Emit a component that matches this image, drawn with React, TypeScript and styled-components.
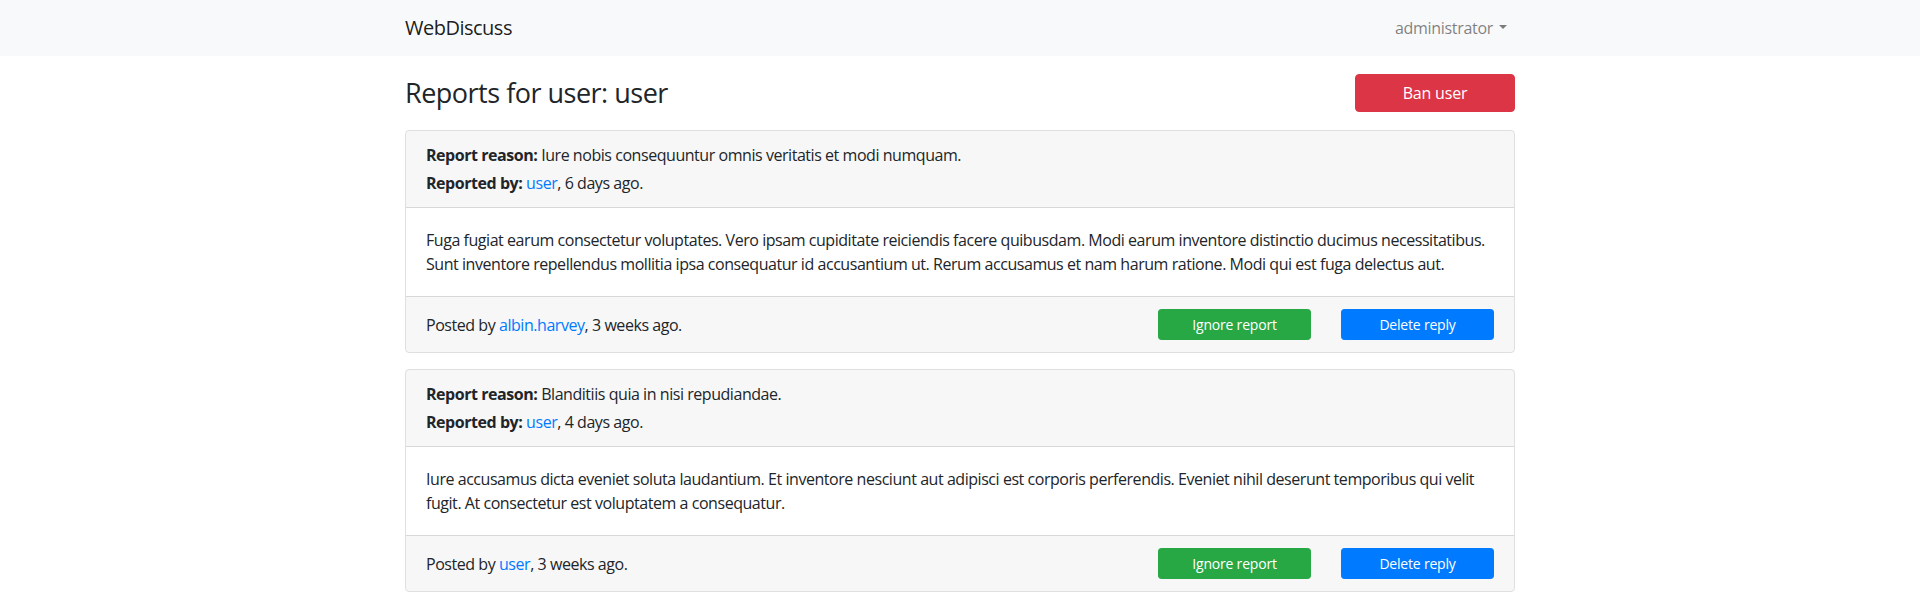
import React from "react";
import styled, { createGlobalStyle } from "styled-components";

const GlobalStyle = createGlobalStyle`
  * { box-sizing: border-box; }
  body {
    margin: 0;
    font-family: "Open Sans", "Noto Sans", Arial, sans-serif;
    font-size: 16px;
    line-height: 1.5;
    color: #212529;
    background: #fff;
    letter-spacing: -0.45px;
  }
`;

const Navbar = styled.nav`
  background: #f8f9fa;
  padding: 8px 16px;
`;

const NavInner = styled.div`
  width: 1140px;
  margin: 0 auto;
  padding: 0 15px;
  display: flex;
  align-items: center;
  justify-content: space-between;
`;

const Brand = styled.a`
  font-size: 20px;
  line-height: 30px;
  padding: 5px 0;
  color: rgba(0, 0, 0, 0.9);
  text-decoration: none;
  letter-spacing: -0.5px;
`;

const UserMenu = styled.a`
  display: flex;
  align-items: center;
  padding: 8px 8px;
  color: rgba(0, 0, 0, 0.5);
  text-decoration: none;
  letter-spacing: -0.3px;
  &::after {
    content: "";
    margin-left: 6px;
    border-top: 4.8px solid;
    border-left: 4.8px solid transparent;
    border-right: 4.8px solid transparent;
    margin-top: -2px;
  }
`;

const Container = styled.main`
  width: 1140px;
  margin: 0 auto;
  padding: 0 15px;
`;

const HeaderRow = styled.div`
  display: flex;
  align-items: center;
  justify-content: space-between;
  margin: 18px 0;
`;

const Title = styled.h3`
  margin: 0;
  font-size: 27px;
  font-weight: 400;
  line-height: 1.2;
  letter-spacing: -0.5px;
`;

const Button = styled.button<{ $variant: "danger" | "success" | "primary"; $small?: boolean }>`
  font-family: inherit;
  letter-spacing: -0.2px;
  border: 1px solid transparent;
  color: #fff;
  cursor: pointer;
  text-align: center;
  background: ${(p) =>
    p.$variant === "danger" ? "#dc3545" : p.$variant === "success" ? "#28a745" : "#007bff"};
  border-color: ${(p) =>
    p.$variant === "danger" ? "#dc3545" : p.$variant === "success" ? "#28a745" : "#007bff"};
  height: ${(p) => (p.$small ? "31px" : "38px")};
  font-size: ${(p) => (p.$small ? "14px" : "16px")};
  border-radius: ${(p) => (p.$small ? "3.2px" : "4px")};
  padding: ${(p) => (p.$small ? "4px 8px" : "6px 12px")};
  width: ${(p) => (p.$small ? "153px" : "160px")};
`;

const Card = styled.section`
  border: 1px solid rgba(0, 0, 0, 0.125);
  border-radius: 4px;
  margin-bottom: 16px;
  overflow: hidden;
`;

const CardHeader = styled.div`
  background: rgba(0, 0, 0, 0.03);
  padding: 12px 20px;
  border-bottom: 1px solid rgba(0, 0, 0, 0.125);
`;

const HeaderLine = styled.p`
  margin: 0 0 4px;
  &:last-child {
    margin-bottom: 0;
  }
`;

const Label = styled.b`
  font-weight: 700;
`;

const Link = styled.a`
  color: #007bff;
  text-decoration: none;
`;

const CardBody = styled.div`
  padding: 20px;
`;

const BodyText = styled.p`
  margin: 0;
`;

const CardFooter = styled.div`
  background: rgba(0, 0, 0, 0.03);
  padding: 12px 20px;
  border-top: 1px solid rgba(0, 0, 0, 0.125);
  display: grid;
  grid-template-columns: 1fr 153px 153px;
  column-gap: 30px;
  align-items: center;
`;

type Report = {
  reason: string;
  reporter: string;
  reportedAgo: string;
  body: string;
  author: string;
  postedAgo: string;
};

const reports: Report[] = [
  {
    reason: "Iure nobis consequuntur omnis veritatis et modi numquam.",
    reporter: "user",
    reportedAgo: "6 days ago.",
    body:
      "Fuga fugiat earum consectetur voluptates. Vero ipsam cupiditate reiciendis facere quibusdam. Modi earum inventore distinctio ducimus necessitatibus. Sunt inventore repellendus mollitia ipsa consequatur id accusantium ut. Rerum accusamus et nam harum ratione. Modi qui est fuga delectus aut.",
    author: "albin.harvey",
    postedAgo: "3 weeks ago.",
  },
  {
    reason: "Blanditiis quia in nisi repudiandae.",
    reporter: "user",
    reportedAgo: "4 days ago.",
    body:
      "Iure accusamus dicta eveniet soluta laudantium. Et inventore nesciunt aut adipisci est corporis perferendis. Eveniet nihil deserunt temporibus qui velit fugit. At consectetur est voluptatem a consequatur.",
    author: "user",
    postedAgo: "3 weeks ago.",
  },
];

export default function App() {
  return (
    <>
      <GlobalStyle />
      <Navbar>
        <NavInner>
          <Brand href="#">WebDiscuss</Brand>
          <UserMenu href="#">administrator</UserMenu>
        </NavInner>
      </Navbar>
      <Container>
        <HeaderRow>
          <Title>Reports for user: user</Title>
          <Button $variant="danger">Ban user</Button>
        </HeaderRow>
        {reports.map((r, i) => (
          <Card key={i}>
            <CardHeader>
              <HeaderLine>
                <Label>Report reason:</Label> {r.reason}
              </HeaderLine>
              <HeaderLine>
                <Label>Reported by:</Label> <Link href="#">{r.reporter}</Link>, {r.reportedAgo}
              </HeaderLine>
            </CardHeader>
            <CardBody>
              <BodyText>{r.body}</BodyText>
            </CardBody>
            <CardFooter>
              <span>
                Posted by <Link href="#">{r.author}</Link>, {r.postedAgo}
              </span>
              <Button $variant="success" $small>
                Ignore report
              </Button>
              <Button $variant="primary" $small>
                Delete reply
              </Button>
            </CardFooter>
          </Card>
        ))}
      </Container>
    </>
  );
}
